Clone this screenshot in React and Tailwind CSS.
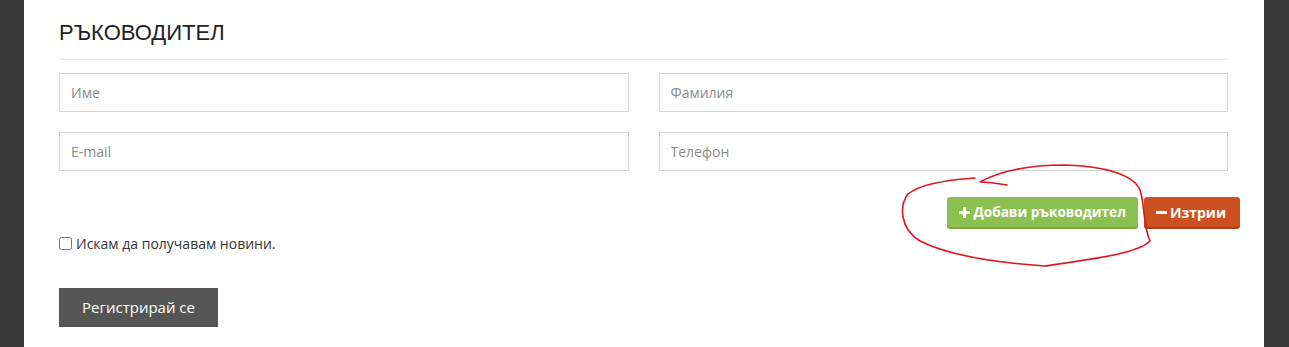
import React from 'react'

function Field({ placeholder }) {
  return (
    <input
      type="text"
      placeholder={placeholder}
      className="h-[39px] w-full border border-[#d5d5d5] bg-white px-[11px] text-[14px] text-[#555] placeholder:text-[#8a8a8a] outline-none"
    />
  )
}

export default function App() {
  return (
    <div className="flex h-[347px] w-full overflow-hidden bg-[#3b3b3b] font-['Open_Sans',sans-serif]">
      {/* Left backdrop strip */}
      <div className="w-[24px] shrink-0 bg-[#3a3a3a]" />

      {/* Form panel */}
      <div className="relative w-[1240px] shrink-0 bg-white pl-[35px] pr-[36px] pt-[22px]">
        <h2 className="font-['Liberation_Sans',Arial,sans-serif] text-[22px] leading-[22px] text-[#222]">
          РЪКОВОДИТЕЛ
        </h2>
        <div className="mt-[15px] h-px bg-[#e8e8e8]" />

        <div className="mt-[13px] grid grid-cols-2 gap-x-[30px] gap-y-[20px]">
          <Field placeholder="Име" />
          <Field placeholder="Фамилия" />
          <Field placeholder="E-mail" />
          <Field placeholder="Телефон" />
        </div>

        {/* Manager actions */}
        <div className="mr-[-12px] mt-[26px] flex justify-end gap-[6px]">
          <button className="flex h-[30px] items-center gap-[3px] rounded-[3px] bg-[#8cc152] pl-[12px] pr-[12px] text-[13.6px] font-bold text-white shadow-[0_2px_0_#79a743]">
            <svg width="11" height="11" viewBox="0 0 11 11">
              <path d="M4 0h3v4h4v3H7v4H4V7H0V4h4z" fill="#fff" />
            </svg>
            Добави ръководител
          </button>
          <button className="flex h-[30px] items-center gap-[3px] rounded-[3px] bg-[#cd5120] pl-[12px] pr-[14px] text-[14px] font-bold text-white shadow-[0_2px_0_#a8411a]">
            <svg width="11" height="11" viewBox="0 0 11 11">
              <path d="M0 4h11v3H0z" fill="#fff" />
            </svg>
            Изтрии
          </button>
        </div>

        <label className="mt-[6px] flex items-center gap-[4px] text-[14px] text-[#333]">
          <input type="checkbox" className="m-0 h-[13px] w-[13px] accent-[#888]" />
          Искам да получавам новини.
        </label>

        <button className="mt-[34px] h-[39px] w-[159px] bg-[#555] text-[15px] text-white">
          Регистрирай се
        </button>

        {/* Hand-drawn annotation */}
        <svg
          className="pointer-events-none absolute left-[-24px] top-0"
          width="1289"
          height="347"
          viewBox="0 0 1289 347"
        >
          <path
            d="M1007 185 C995 183 986 182 980 182 C1000 171 1030 165 1065 165 C1105 166 1134 175 1140 190 C1145 205 1143 226 1150 241 C1138 253 1100 258 1045 266 C1000 263 950 256 920 241 C900 229 899 206 908 194 C920 184 945 180 975 178"
            fill="none"
            stroke="#e0141b"
            strokeWidth="1.6"
            strokeLinecap="round"
          />
        </svg>
      </div>

      <div className="flex-1 bg-[#3a3a3a]" />
    </div>
  )
}
